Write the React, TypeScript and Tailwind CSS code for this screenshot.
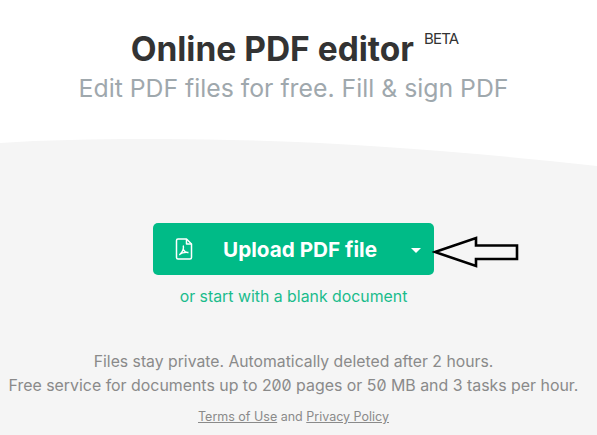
const WaveTop = () => (
  <svg className="block h-[30px] w-full" viewBox="0 0 597 30" preserveAspectRatio="none">
    <path d="M0 4 C70 -0.5 150 -0.5 230 1 C340 3 470 13 597 27 L597 0 L0 0 Z" fill="#ffffff" />
  </svg>
);

const PdfIcon = () => (
  <svg className="h-[22px] w-[18px]" viewBox="0 0 18 22" fill="none" stroke="currentColor" strokeWidth={1.5} strokeLinejoin="round">
    <path d="M3 1h8.5L16.5 6v13.5a1.5 1.5 0 0 1-1.5 1.5H3a1.5 1.5 0 0 1-1.5-1.5v-17A1.5 1.5 0 0 1 3 1z" />
    <path d="M11.5 1v5h5" />
    <path d="M8.3 7.5c.6 3-1.2 7-4 9.5M8.3 11.5c1 2 2.5 3 5 3.3M4.5 16.5c2.5-2 5.5-2.5 9-2" strokeWidth={1.4} />
  </svg>
);

export default function App() {
  return (
    <div className="relative h-[435px] w-[597px] overflow-hidden bg-white font-['Inter',sans-serif]">
      <div className="h-[139px] pt-[28px] pr-[10px] text-center">
        <div className="flex items-start justify-center">
          <h1 className="ml-[2px] text-[33.5px] leading-[42px] font-bold text-[#333333]">Online PDF editor</h1>
          <span className="mt-[3px] ml-[10px] text-[15px] leading-[16px] font-normal tracking-[-0.8px] text-[#333333]">
            BETA
          </span>
        </div>
        <p className="mt-[2px] text-[24.8px] leading-[32px] text-[#9fa8ad]">
          Edit PDF files for free. Fill &amp; sign PDF
        </p>
      </div>

      <div className="h-[296px] bg-[#f5f5f5]">
        <WaveTop />
        <div className="flex flex-col items-center pt-[54px] pr-[10px]">
          <button className="flex h-[52px] w-[281px] items-center rounded-[5px] bg-[#00bb87] text-white">
            <span className="flex w-[62px] justify-center">
              <PdfIcon />
            </span>
            <span className="pt-[1px] pl-[8px] text-left text-[20.7px] font-bold">Upload PDF file</span>
            <span className="mt-[3px] mr-[13px] ml-auto h-0 w-0 border-x-[5px] border-t-[5px] border-x-transparent border-t-white" />
          </button>
          <a className="mt-[12px] text-[15.85px] leading-[20px] text-[#1abc8c]">or start with a blank document</a>
          <div className="mt-[43px] text-center leading-[24px] whitespace-nowrap text-[#8a8a8a] slashed-zero">
            <p className="text-[15.75px]">Files stay private. Automatically deleted after 2 hours.</p>
            <p className="text-[15.9px]">Free service for documents up to 200 pages or 50 MB and 3 tasks per hour.</p>
          </div>
          <p className="mt-[10px] text-[12.5px] leading-[18px] text-[#8a8a8a]">
            <span className="underline">Terms of Use</span> and{" "}
            <span className="underline">Privacy Policy</span>
          </p>
        </div>
      </div>

      <svg className="absolute top-[234px] left-[432px] h-[36px] w-[88px]" viewBox="432 234 88 36" fill="none" stroke="#000000" strokeWidth={2.6}>
        <path d="M435 252 L476 238 L476 245.5 L517 245.5 L517 259 L476 259 L476 266 Z" />
      </svg>
    </div>
  );
}
